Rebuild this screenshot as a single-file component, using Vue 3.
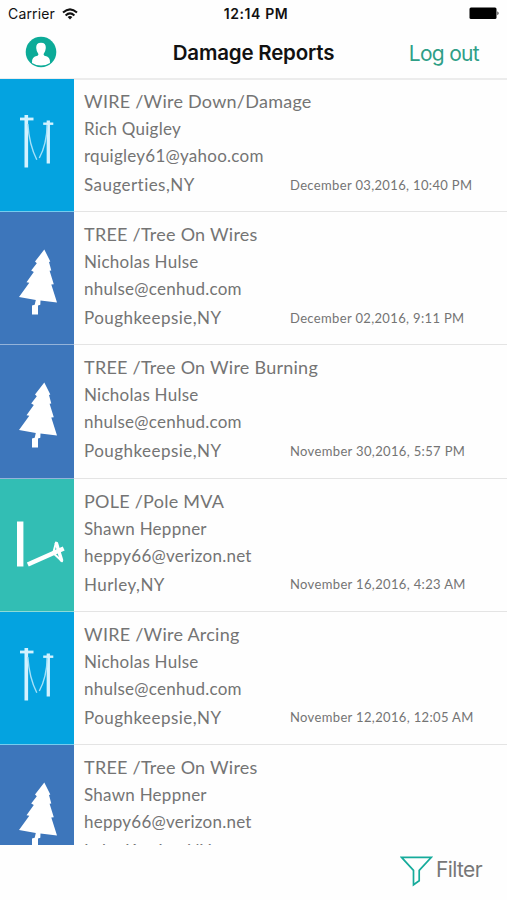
<script setup>
import { ref } from 'vue'

// --- Damage reports ---
const reports = ref([
  { id: 1, type: 'wire', title: 'WIRE /Wire Down/Damage', name: 'Rich Quigley', email: 'rquigley61@yahoo.com', city: 'Saugerties,NY', date: 'December 03,2016, 10:40 PM' },
  { id: 2, type: 'tree', title: 'TREE /Tree On Wires', name: 'Nicholas Hulse', email: 'nhulse@cenhud.com', city: 'Poughkeepsie,NY', date: 'December 02,2016, 9:11 PM' },
  { id: 3, type: 'tree', title: 'TREE /Tree On Wire Burning', name: 'Nicholas Hulse', email: 'nhulse@cenhud.com', city: 'Poughkeepsie,NY', date: 'November 30,2016, 5:57 PM' },
  { id: 4, type: 'pole', title: 'POLE /Pole MVA', name: 'Shawn Heppner', email: 'heppy66@verizon.net', city: 'Hurley,NY', date: 'November 16,2016, 4:23 AM' },
  { id: 5, type: 'wire', title: 'WIRE /Wire Arcing', name: 'Nicholas Hulse', email: 'nhulse@cenhud.com', city: 'Poughkeepsie,NY', date: 'November 12,2016, 12:05 AM' },
  { id: 6, type: 'tree', title: 'TREE /Tree On Wires', name: 'Shawn Heppner', email: 'heppy66@verizon.net', city: 'Lake Katrine,NY', date: 'November 11,2016, 9:30 AM' },
])
</script>

<template>
  <div class="screen">
    <!-- Status bar -->
    <div class="status">
      <div class="carrier">
        <span>Carrier</span>
        <svg width="16" height="12" viewBox="0 0 16 12" fill="none" stroke="#111" stroke-width="2">
          <path d="M1 4.6Q8 -1.8 15 4.6" />
          <path d="M3.6 7.4Q8 3.4 12.4 7.4" />
          <path d="M5.6 9Q8 7 10.4 9L8 11.6Z" fill="#111" stroke="none" />
        </svg>
      </div>
      <span class="time">12:14 PM</span>
      <svg class="battery" width="31" height="13" viewBox="0 0 31 13">
        <rect x="0.5" y="0.5" width="27" height="11.5" rx="1.5" />
        <path d="M28.5 4.3Q30.5 6.2 28.5 8.2Z" />
      </svg>
    </div>

    <!-- Navigation bar -->
    <header class="navbar">
      <svg class="avatar" width="32" height="32" viewBox="0 0 32 32">
        <circle cx="16" cy="16" r="15.3" fill="#0cab98" />
        <path d="M7 27Q6.3 20.8 12.6 19.8L13.5 18.2Q11.4 15.8 11.2 12Q10.9 6.8 16 6.8Q21.1 6.8 20.8 12Q20.6 15.8 18.5 18.2L19.4 19.8Q25.7 20.8 25 27Q21 29.6 16 29.6Q11 29.6 7 27Z" fill="#fff" />
      </svg>
      <h1>Damage Reports</h1>
      <a class="logout">Log out</a>
    </header>

    <!-- Report list -->
    <main class="list">
      <article v-for="r in reports" :key="r.id" class="row">
        <div class="tile" :class="r.type">
          <svg v-if="r.type === 'wire'" width="74" height="133" viewBox="0 0 74 133" fill="none" stroke="#d3f2ff">
            <path d="M26.3 36V88.5" stroke-width="3.6" />
            <path d="M20 40H33.5" stroke-width="2.8" />
            <path d="M48.3 41.5V84.5" stroke-width="3.3" />
            <path d="M43.2 44.7H53.3" stroke-width="2.4" />
            <path d="M27.8 45Q29.3 66 36.8 80.8M47.3 46Q46.5 66 39.3 79" stroke-width="1.4" stroke="#a5e1f9" />
          </svg>
          <svg v-else-if="r.type === 'tree'" width="74" height="133" viewBox="0 0 74 133" fill="#fff">
            <path d="M44.3 37.5L50.3 49.5L49 50L51.3 58.5L49.6 58.8L53.8 72.2L51.3 72.4L57 90.5L40.5 88.6L40.3 92.8L38 93.6V102.5H32V93.4L34.7 92.7L35.8 87.9L19 85L29.3 70.7L26.5 70.2L33.8 60L31.2 58.4L36.8 51.2L35 49.6Z" />
          </svg>
          <svg v-else width="74" height="133" viewBox="0 0 74 133" fill="none" stroke="#fff">
            <path d="M20.2 42.5V87.5" stroke-width="6.4" />
            <path d="M27.8 85.5L63.7 69.5" stroke-width="4.6" />
            <path d="M56 63.5L53.2 74L62 82.3Z" stroke-width="2" stroke-linejoin="round" />
            <path d="M56.2 63.5L61.8 82" stroke-width="3.4" />
          </svg>
        </div>
        <div class="info">
          <h2>{{ r.title }}</h2>
          <p>{{ r.name }}</p>
          <p>{{ r.email }}</p>
          <div class="bottom">
            <p>{{ r.city }}</p>
            <time>{{ r.date }}</time>
          </div>
        </div>
      </article>
    </main>

    <!-- Toolbar -->
    <footer class="toolbar">
      <svg width="33" height="31" viewBox="0 0 33 31" fill="none" stroke="#16ab9b" stroke-width="1.7">
        <path d="M1.6 1.4H31.3L19.2 14.4V24.7L13.5 28.8V14.4Z" />
      </svg>
      <span>Filter</span>
    </footer>
  </div>
</template>

<style>
body {
  margin: 0;
  background: #fff;
}
</style>

<style scoped>
.screen {
  width: 507px;
  height: 900px;
  display: flex;
  flex-direction: column;
  overflow: hidden;
  background: #fefefe;
  font-family: Inter, 'Liberation Sans', sans-serif;
}

h1,
h2,
p {
  margin: 0;
}

/* Status bar */
.status {
  height: 27px;
  flex: none;
  box-sizing: border-box;
  padding: 0 7px 0 8px;
  display: grid;
  grid-template-columns: 1fr auto 1fr;
  align-items: center;
  font-size: 14px;
  letter-spacing: 0.15px;
  color: #111;
}

.carrier {
  display: flex;
  align-items: center;
  gap: 7px;
}

.time {
  padding-left: 4px;
  font-weight: 600;
  font-size: 14px;
  letter-spacing: 0.6px;
}

.battery {
  justify-self: end;
}

/* Navigation bar */
.navbar {
  height: 53px;
  flex: none;
  box-sizing: border-box;
  padding: 0 27px 1px 25px;
  display: grid;
  grid-template-columns: 1fr auto 1fr;
  align-items: center;
  border-bottom: 2px solid #ececec;
}

.navbar h1 {
  padding-left: 2px;
  font-size: 20.5px;
  font-weight: 600;
  letter-spacing: -0.2px;
  color: #111;
}

.logout {
  justify-self: end;
  padding: 2px 1px 0 0;
  font-size: 21px;
  letter-spacing: -0.7px;
  color: #2f9f87;
}

/* List */
.list {
  height: 766px;
  flex: none;
  margin-top: -1px;
  overflow: hidden;
}

.row {
  height: 133.2px;
  display: flex;
}

.tile {
  width: 74px;
  flex: none;
  box-sizing: border-box;
  border-bottom: 1px solid rgba(255, 255, 255, 0.45);
  overflow: hidden;
}

.tile svg {
  display: block;
}

.wire {
  background: #04a3e0;
}

.tree {
  background: #3d76bb;
}

.pole {
  background: #32beb4;
}

.info {
  flex: 1;
  box-sizing: border-box;
  padding: 9px 0 0 10px;
  border-bottom: 1px solid #e4e4e4;
  font-family: Lato, 'Liberation Sans', sans-serif;
  font-variant-ligatures: none;
  letter-spacing: 0.25px;
  color: #747474;
  white-space: nowrap;
}

.info h2 {
  margin-bottom: 1px;
  font-size: 18px;
  font-weight: 400;
  line-height: 26px;
}

.info p {
  font-size: 17px;
  line-height: 27px;
}

.bottom {
  display: grid;
  grid-template-columns: 206px 1fr;
  align-items: center;
  margin-top: 2px;
}

.bottom p {
  letter-spacing: 0.45px;
}

.bottom time {
  font-size: 13px;
  letter-spacing: 0.35px;
}

/* Toolbar */
.toolbar {
  height: 55px;
  flex: none;
  box-sizing: border-box;
  padding: 0 25px 3px 0;
  display: flex;
  align-items: center;
  justify-content: flex-end;
  gap: 3px;
  font-size: 21px;
  letter-spacing: -0.6px;
  color: #777;
}

.toolbar span {
  padding-bottom: 3px;
}
</style>
